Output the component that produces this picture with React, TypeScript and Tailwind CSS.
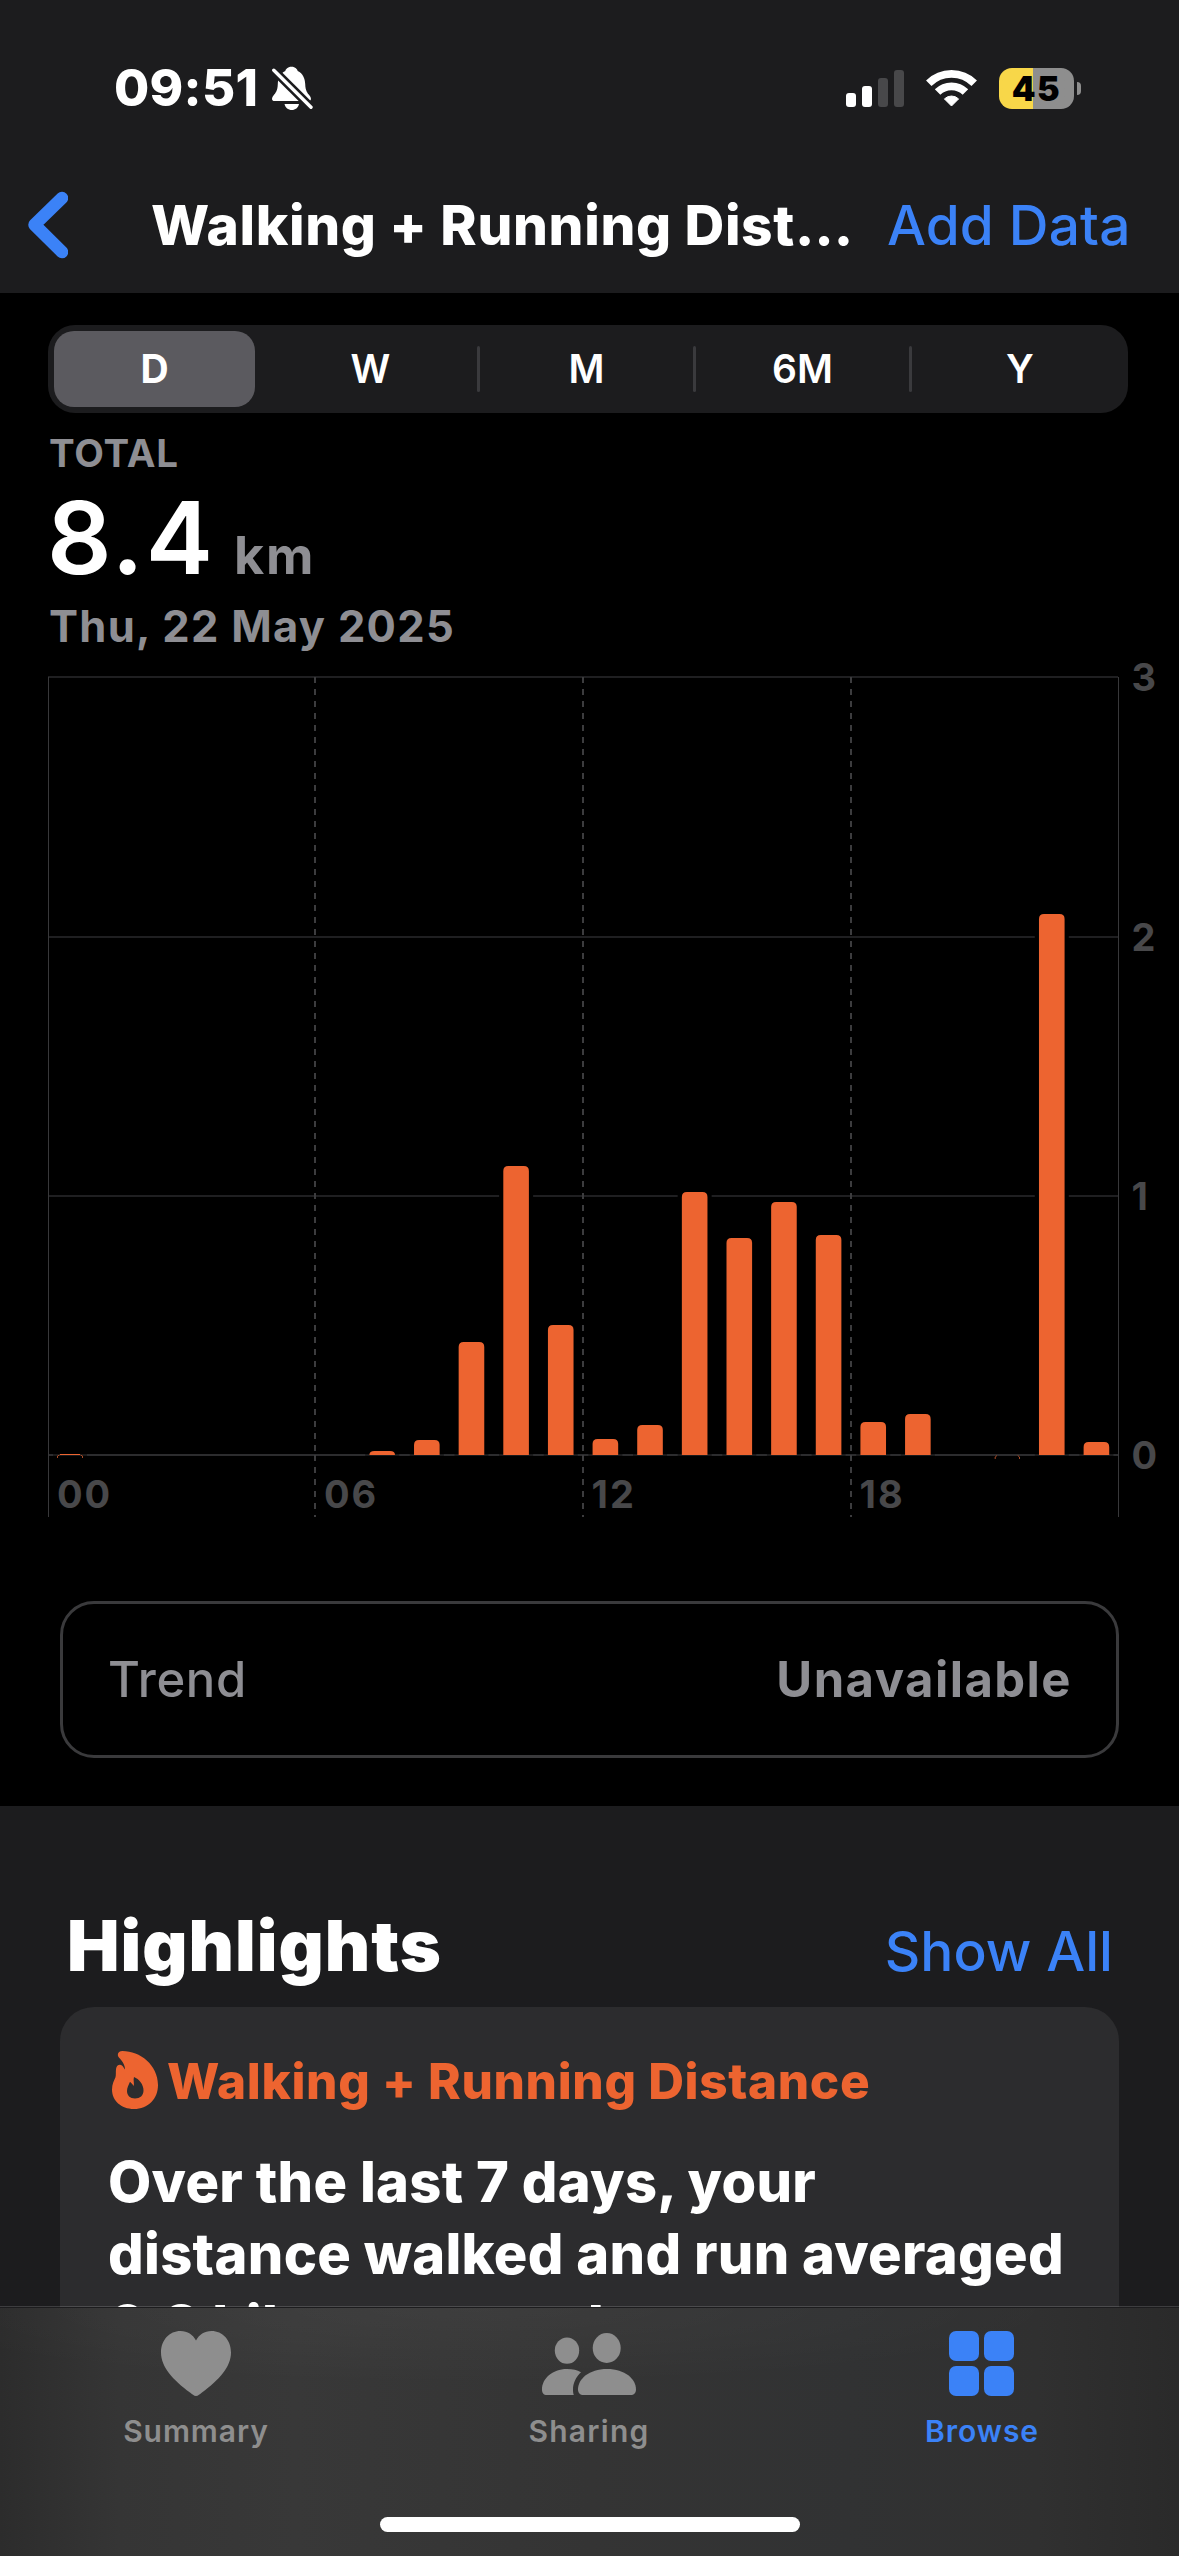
const RANGES = ["D", "W", "M", "6M", "Y"];

const BARS = [
  { hour: 7, top: 1451 },
  { hour: 8, top: 1440 },
  { hour: 9, top: 1342 },
  { hour: 10, top: 1166 },
  { hour: 11, top: 1325 },
  { hour: 12, top: 1439 },
  { hour: 13, top: 1425 },
  { hour: 14, top: 1192 },
  { hour: 15, top: 1238 },
  { hour: 16, top: 1202 },
  { hour: 17, top: 1235 },
  { hour: 18, top: 1422 },
  { hour: 19, top: 1414 },
  { hour: 22, top: 914 },
  { hour: 23, top: 1442 },
];

const Y_LABELS = [
  { y: 691, text: "3" },
  { y: 950.5, text: "2" },
  { y: 1209.5, text: "1" },
  { y: 1469, text: "0" },
];

const X_LABELS = [
  { x: 57, text: "00" },
  { x: 324, text: "06" },
  { x: 591.5, text: "12" },
  { x: 859.5, text: "18" },
];

const barX = (hour: number) => 56.9 + hour * 44.64;

function BellOff() {
  return (
    <svg className="h-[44px] w-[42px]" viewBox="0 0 42 44">
      <mask id="bell-slash">
        <rect width="42" height="44" fill="white" />
        <path d="M-2 -.6L45 46.2" stroke="black" strokeWidth="8.6" />
      </mask>
      <g fill="white" mask="url(#bell-slash)">
        <path d="M20.5 .8C16.5 .8 14.8 3.4 14.3 5C9 7.5 7 12.5 6.8 18C6.6 25 4.5 27 2.5 29.5C.3 32.3 .5 35 3.5 35H37.5C40.5 35 40.7 32.3 38.5 29.5C36.5 27 34.4 25 34.2 18C34 12.5 32 7.5 26.7 5C26.2 3.4 24.5 .8 20.5 .8Z" />
      </g>
      <path d="M13.5 38H28C27.3 41.8 24.2 44 20.8 44C17.2 44 14.2 41.8 13.5 38Z" fill="white" />
      <path d="M2.8 4.2L40 41.2" stroke="white" strokeWidth="3.4" strokeLinecap="round" />
    </svg>
  );
}

function Signal() {
  return (
    <svg className="h-[37px] w-[58px]" viewBox="0 0 58 37">
      <rect x="0" y="23" width="10" height="14" rx="3" fill="white" />
      <rect x="16" y="16" width="10" height="21" rx="3" fill="white" />
      <rect x="32" y="8" width="10" height="29" rx="3" fill="#48484a" />
      <rect x="48" y="0" width="10" height="37" rx="3" fill="#48484a" />
    </svg>
  );
}

function Wifi() {
  return (
    <svg className="h-[37px] w-[51px]" viewBox="0 0 51 37" fill="none">
      <path d="M2.77 13.27A32.15 32.15 0 0 1 48.23 13.27" stroke="white" strokeWidth="7.7" />
      <path d="M11.57 22.07A19.7 19.7 0 0 1 39.43 22.07" stroke="white" strokeWidth="7.8" />
      <path d="M18.4 28.9A10.2 10.2 0 0 1 32.6 28.9L25.5 36Z" fill="white" stroke="white" strokeWidth="1" strokeLinejoin="round" />
    </svg>
  );
}

function Battery() {
  return (
    <div className="flex items-center gap-[3px]">
      <div className="flex h-[41px] w-[75px] items-center justify-center rounded-[13px] bg-linear-to-r from-[#f8d749] from-[45.5%] to-[#8e8e8e] to-[45.5%]">
        <span className="text-[34px] leading-[41px] font-black tracking-[1.4px] text-black">45</span>
      </div>
      <div className="h-[13px] w-[4px] rounded-r-full bg-[#8e8e8e]" />
    </div>
  );
}

function Header() {
  return (
    <header className="h-[293px] shrink-0 bg-[#1c1c1e] pt-[66px]">
      <div className="flex h-[44px] items-center pr-[98px] pl-[114px]">
        <span className="w-[157px] text-[51px] leading-[44px] font-extrabold tracking-[0.29px]">09:51</span>
        <BellOff />
        <div className="ml-auto flex items-center gap-[22px]">
          <Signal />
          <Wifi />
          <Battery />
        </div>
      </div>
      <div className="mt-[75px] flex h-[80px] items-center pl-[27px]">
        <svg className="h-[68px] w-[41px]" viewBox="0 0 41 68" fill="none">
          <path d="M35 7L7.5 33.8L35 61" stroke="#3b82f7" strokeWidth="12.5" strokeLinecap="round" strokeLinejoin="round" />
        </svg>
        <h1 className="ml-[83px] w-[736px] text-[55px] leading-[80px] font-extrabold tracking-[0.65px]">Walking + Running Dist…</h1>
        <span className="text-[55px] leading-[80px] font-medium tracking-[0.15px] text-[#3b82f7]">Add Data</span>
      </div>
    </header>
  );
}

function SegmentedControl() {
  return (
    <div className="mx-[48px] grid h-[88px] w-[1080px] grid-cols-5 rounded-[27px] bg-[#1c1c1e]">
      {RANGES.map((range, i) =>
        i === 0 ? (
          <div key={range} className="my-[6px] ml-[6px] w-[201px] rounded-[20px] bg-[#5b5a5f] text-center text-[39px] leading-[76px] font-bold">
            {range}
          </div>
        ) : (
          <div key={range} className="flex items-center">
            <span className="flex-1 text-center text-[39px] leading-[88px] font-semibold">{range}</span>
            {i < 4 && <span className="h-[46px] w-[3px] rounded-full bg-[#3a3a3d]" />}
          </div>
        ),
      )}
    </div>
  );
}

function DistanceChart() {
  return (
    <svg className="h-[880px] w-[1179px]" viewBox="0 651 1179 880">
      <g stroke="#1f1f21" strokeWidth="2">
        <path d="M48 677H1118" />
        <path d="M48 937H1118" />
        <path d="M48 1196H1118" />
        <path d="M48 1455H1118" stroke="#2c2c2e" />
      </g>
      <g stroke="#38383a" strokeWidth="1">
        <path d="M48.5 677V1517" />
        <path d="M1118.5 677V1517" />
      </g>
      <g stroke="#3c3c3e" strokeWidth="2" strokeDasharray="6 6">
        <path d="M315 677V1455M315 1455V1517" />
        <path d="M583 677V1455M583 1455V1517" />
        <path d="M851 677V1455M851 1455V1517" />
      </g>
      {BARS.map(({ hour, top }) => {
        const x = barX(hour);
        return (
          <g key={hour}>
            <rect x={x - 4.2} y={top - 4} width="34" height={1454 - top + 4} fill="black" />
            <rect x={x - 4.2} y="1454" width="34" height="2" fill="#1a1a1b" />
            <path
              d={`M${x} 1455V${top + Math.min(5, 1455 - top)}Q${x} ${top} ${x + 5} ${top}H${x + 20.6}Q${x + 25.6} ${top} ${x + 25.6} ${top + Math.min(5, 1455 - top)}V1455Z`}
              fill="#ed6430"
            />
          </g>
        );
      })}
      <rect x="53" y="1454" width="34" height="2" fill="#1a1a1b" />
      <path d="M60 1454.5H80" stroke="#ed6430" strokeWidth="1" />
      <g stroke="#a84a26" strokeWidth="1" fill="none">
        <path d="M57.5 1458V1456L59.5 1455M82.5 1458V1456L80.5 1455" />
        <path d="M995.2 1459V1457L997 1455.5M1019.5 1459V1457L1017.7 1455.5" />
      </g>
      <g fill="#48484a" fontSize="38" fontWeight="700">
        {Y_LABELS.map(({ y, text }) => (
          <text key={text} x="1131.5" y={y}>{text}</text>
        ))}
        {X_LABELS.map(({ x, text }) => (
          <text key={text} x={x} y="1508" letterSpacing="2">{text}</text>
        ))}
      </g>
    </svg>
  );
}

function FlameIcon() {
  return (
    <svg className="h-[58px] w-[46px]" viewBox="0 0 46 58">
      <path
        fill="#ed6430"
        fillRule="evenodd"
        d="M10.5 0C28 0 46 14 46 34C46 48 36 58 22 58C9 58 0 49.5 0 38.5C0 33 2.2 29 3.4 26.5C4.2 24.5 3.6 21.5 4 18C4.5 14 8 12.5 10.5 15C11.3 15.8 12.2 17.5 13 18.5C13 15 11.5 12 9.5 9.5C7.5 7 5.8 6 5.8 4C5.8 1.5 7.8 0 10.5 0ZM22 26C27 28 31.5 33.5 31.5 39.5C31.5 44.5 28 47.5 23 47.5C18 47.5 15 44.5 15 40C15 37 16.5 34.5 18 30.8C19.5 32 20.5 33.5 21.8 35C22.4 32 21 29 22 26Z"
      />
    </svg>
  );
}

function HeartIcon() {
  return (
    <svg className="h-[65px] w-[70px]" viewBox="0 0 70 65" fill="#8e8e8e">
      <path d="M35 65C33 65 31 63 29 61.5C12 49 0 36 0 21.5C0 9 8.5 0 19.5 0C26.5 0 32 3.7 35 9.5C38 3.7 43.5 0 50.5 0C61.5 0 70 9 70 21.5C70 36 58 49 41 61.5C39 63 37 65 35 65Z" />
    </svg>
  );
}

function PeopleIcon() {
  return (
    <svg className="h-[62px] w-[94px]" viewBox="0 0 94 62" fill="#8e8e8e">
      <ellipse cx="25" cy="17.6" rx="12.2" ry="13.2" />
      <ellipse cx="64.7" cy="15" rx="14" ry="15" />
      <path d="M5 62C1.5 62 0 60 0 56.5C0 46 10 36 25 36C31 36 35 37 39 39.3C34 44 31 50 31 56.5C31 58.5 31.2 60.5 31.8 62Z" />
      <path d="M41.5 62C38 62 36 60 36 56.5C36 46 47 36 65 36C83 36 94 46 94 56.5C94 60 92 62 88.5 62Z" />
    </svg>
  );
}

function GridIcon() {
  return (
    <svg className="h-[65px] w-[65px]" viewBox="0 0 65 65" fill="#3b82f7">
      <rect x="0" y="0" width="30" height="30" rx="7" />
      <rect x="35" y="0" width="30" height="30" rx="7" />
      <rect x="0" y="35" width="30" height="30" rx="7" />
      <rect x="35" y="35" width="30" height="30" rx="7" />
    </svg>
  );
}

function TabBar() {
  return (
    <nav className="relative -mt-px flex h-[250px] shrink-0 flex-col items-center border-t border-white/15">
      <div className="absolute inset-x-0 top-px -z-10 h-full bg-[linear-gradient(to_right,#2c2c2c,#353535_10%,#383838_25%,#343434_50%,#313233_72%,#303030_88%,#2a2a2a)]" />
      <div className="absolute inset-x-0 top-px -z-10 h-[90px] bg-[radial-gradient(ellipse_at_40%_0%,rgba(255,255,255,0.04),transparent_60%)]" />
      <div className="grid w-full grid-cols-3 pt-[24px]">
        <div className="flex flex-col items-center pr-px text-[#8e8e8e]">
          <div className="flex h-[65px] items-center">
            <HeartIcon />
          </div>
          <span className="mt-[17px] text-[30px] leading-[36px] font-semibold tracking-[0.92px]">Summary</span>
        </div>
        <div className="flex flex-col items-center pr-px text-[#8e8e8e]">
          <div className="flex h-[65px] items-center">
            <PeopleIcon />
          </div>
          <span className="mt-[17px] text-[30px] leading-[36px] font-semibold tracking-[1.25px]">Sharing</span>
        </div>
        <div className="flex flex-col items-center pr-[2px] text-[#3b82f7]">
          <div className="flex h-[65px] items-center">
            <GridIcon />
          </div>
          <span className="mt-[17px] pl-px text-[30px] leading-[36px] font-semibold tracking-[1px]">Browse</span>
        </div>
      </div>
      <div className="mt-[68px] h-[15px] w-[420px] rounded-full bg-white" />
    </nav>
  );
}

export default function App() {
  return (
    <div className="relative isolate flex h-[2556px] w-[1179px] flex-col overflow-hidden bg-[#1c1c1e] font-['Inter',sans-serif] whitespace-nowrap text-white">
      <Header />
      <main className="flex h-[1513px] shrink-0 flex-col bg-black pt-[32px]">
        <SegmentedControl />
        <div className="mt-[20px] pl-[49px] text-[38.5px] leading-[40px] font-bold tracking-[0.81px] text-[#8e8e93]">TOTAL</div>
        <div className="mt-[19px] flex h-[91px] items-baseline pl-[47px]">
          <span className="w-[187px] text-[101px] leading-[90px] font-semibold tracking-[2px]">8.4</span>
          <span className="text-[52px] leading-[50px] font-bold tracking-[1.8px] text-[#8e8e93]">km</span>
        </div>
        <div className="mt-[18px] h-[50px] pl-[49px] text-[43.5px] leading-[50px] font-bold tracking-[1.3px] text-[#8e8e93]">Thu, 22 May 2025</div>
        <DistanceChart />
        <div className="mx-[60px] mt-[70px] flex h-[157px] shrink-0 items-center justify-between rounded-[34px] border-[3px] border-[#3a3a3c] pr-[44px] pl-[45px] text-[49px] text-[#8e8e93]">
          <span className="font-medium tracking-[0.6px]">Trend</span>
          <span className="font-bold tracking-[1.45px]">Unavailable</span>
        </div>
      </main>
      <section className="h-[501px] shrink-0 overflow-hidden pt-[100px]">
        <div className="flex h-[80px] items-baseline justify-between pr-[66px] pl-[67px]">
          <h2 className="text-[70px] leading-[80px] font-black tracking-[1px]">Highlights</h2>
          <span className="text-[55px] leading-[60px] font-medium tracking-[0.05px] text-[#3b82f7]">Show All</span>
        </div>
        <article className="mx-[60px] mt-[21px] h-[500px] rounded-t-[34px] bg-[#2c2c2e] pt-[44px] pl-[48px]">
          <div className="flex h-[60px] pl-[4px] text-[#ed6430]">
            <FlameIcon />
            <h3 className="ml-[9px] text-[49.5px] leading-[60px] font-extrabold tracking-[0.64px]">Walking + Running Distance</h3>
          </div>
          <p className="mt-[35px] text-[56px] leading-[72px] font-extrabold tracking-[0.3px]">
            Over the last 7 days, your
            <br />
            distance walked and run averaged
            <br />
            6.2 kilometres a day.
          </p>
        </article>
      </section>
      <TabBar />
    </div>
  );
}
